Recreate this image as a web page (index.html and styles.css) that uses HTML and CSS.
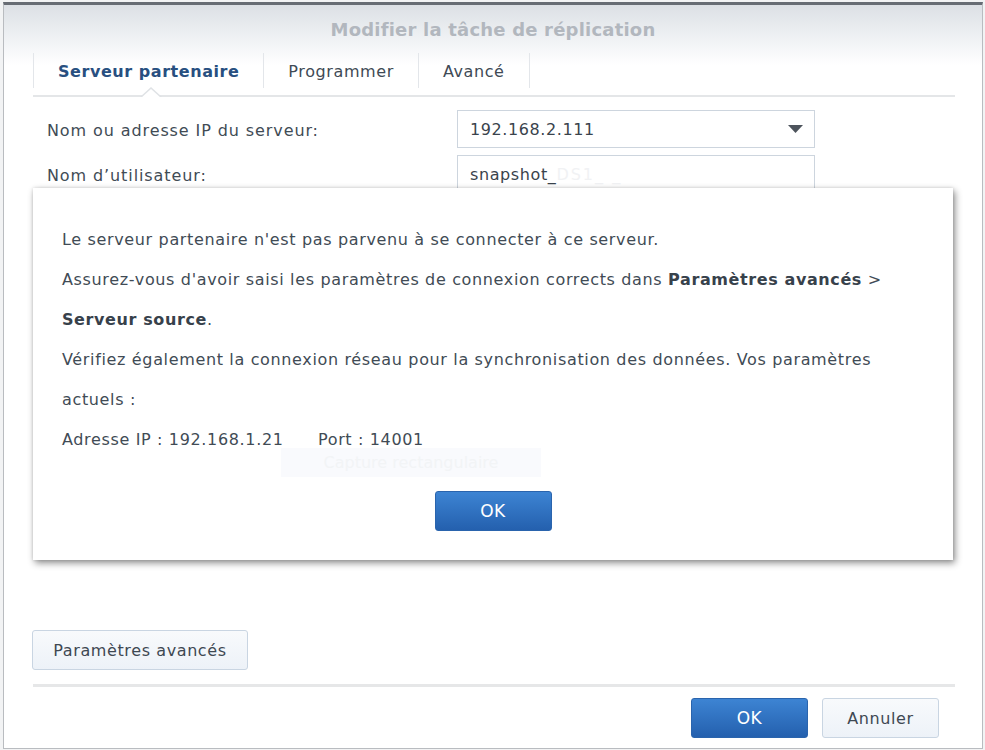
FILE: index.html
```html
<!DOCTYPE html>
<html lang="fr">
<head>
<meta charset="utf-8">
<title>Modifier la tâche de réplication</title>
<link rel="stylesheet" href="styles.css">
</head>
<body>
<div class="window">
  <div class="title">Modifier la tâche de réplication</div>
  <div class="tabs">
    <div class="tab active">Serveur partenaire</div>
    <div class="tab">Programmer</div>
    <div class="tab">Avancé</div>
  </div>
  <div class="form">
    <div class="row">
      <label class="label">Nom ou adresse IP du serveur:</label>
      <div class="field select">
        <span>192.168.2.111</span>
        <svg class="arrow" width="15" height="8" viewBox="0 0 15 8"><path d="M0 0 H15 L7.5 8 Z" fill="#4d545c"/></svg>
      </div>
    </div>
    <div class="row">
      <label class="label">Nom d’utilisateur:</label>
      <div class="field"><span>snapshot_</span><span class="blur">DS1_ _</span></div>
    </div>
  </div>
  <div class="spacer"></div>
  <div class="adv-row">
    <button class="btn light adv">Paramètres avancés</button>
  </div>
  <div class="footer">
    <button class="btn blue">OK</button>
    <button class="btn light">Annuler</button>
  </div>
</div>

<div class="modal">
  <p>Le serveur partenaire n'est pas parvenu à se connecter à ce serveur.</p>
  <p>Assurez-vous d'avoir saisi les paramètres de connexion corrects dans <b>Paramètres avancés</b> &gt;<br><b>Serveur source</b>.</p>
  <p>Vérifiez également la connexion réseau pour la synchronisation des données. Vos paramètres<br>actuels :</p>
  <p>Adresse IP : 192.168.1.21&nbsp;&nbsp;&nbsp;&nbsp;&nbsp; Port : 14001</p>
  <div class="ghost">Capture rectangulaire</div>
  <div class="modal-actions">
    <button class="btn blue">OK</button>
  </div>
</div>
</body>
</html>
```
FILE: styles.css
```css
html, body {
  margin: 0;
  padding: 0;
}
body {
  width: 985px;
  height: 750px;
  background: #f2f3f4;
  font-family: "DejaVu Sans", Verdana, sans-serif;
  color: #414b55;
  position: relative;
  overflow: hidden;
  padding: 2px 3px 0 3px;
  box-sizing: border-box;
}
.window {
  width: 980px;
  height: 747px;
  box-sizing: border-box;
  border-top: 3px solid #676c74;
  border-left: 1px solid #b9bcc0;
  border-right: 1px solid #b9bcc0;
  border-bottom: 1px solid #b9bcc0;
  background: linear-gradient(#dce0e5 0px, #f3f5f7 40px, #ffffff 60px);
  display: flex;
  flex-direction: column;
  padding: 0 27px 0 29px;
}
.title {
  height: 48px;
  line-height: 50px;
  text-align: center;
  font-weight: bold;
  font-size: 18px;
  letter-spacing: 0.2px;
  color: #b2b7be;
  margin: 0 -27px 0 -29px;
}
.tabs {
  display: flex;
  border-bottom: 2px solid #e4e6e8;
  height: 44px;
  box-sizing: border-box;
  position: relative;
}
.tab {
  height: 35px;
  line-height: 38px;
  padding: 0 24px;
  font-size: 16px;
  letter-spacing: 0.6px;
  color: #404a55;
  border-right: 1px solid #e3e6ea;
  position: relative;
}
.tab:first-child {
  border-left: 1px solid #e3e6ea;
}
.tab.active {
  font-weight: bold;
  letter-spacing: 0.55px;
  color: #284f80;
}
.tab.active::before {
  content: "";
  position: absolute;
  left: 106px;
  top: 34px;
  border-left: 11px solid transparent;
  border-right: 11px solid transparent;
  border-bottom: 10px solid #dfe2e5;
}
.tab.active::after {
  content: "";
  position: absolute;
  left: 107px;
  top: 36px;
  border-left: 10px solid transparent;
  border-right: 10px solid transparent;
  border-bottom: 9px solid #ffffff;
}
.form {
  margin-top: 13px;
  padding-left: 14px;
  display: flex;
  flex-direction: column;
  gap: 7px;
}
.row {
  display: flex;
  align-items: center;
  height: 38px;
}
.label {
  width: 410px;
  font-size: 16px;
  letter-spacing: 0.9px;
  color: #414b55;
  padding-top: 3px;
}
.field {
  width: 358px;
  height: 38px;
  box-sizing: border-box;
  border: 1px solid #cdd5de;
  background: #fff;
  display: flex;
  align-items: center;
  padding: 0 12px;
  font-size: 16px;
  letter-spacing: 0.6px;
  color: #3a434c;
}
.select {
  justify-content: space-between;
}
.arrow {
  margin-right: -1px;
}
.blur {
  color: #f1f2f4;
  letter-spacing: 2px;
}
.spacer {
  flex: 1;
}
.adv-row {
  display: flex;
}
.btn {
  font-family: "DejaVu Sans", Verdana, sans-serif;
  font-size: 16px;
  letter-spacing: 0.6px;
  height: 40px;
  border-radius: 3px;
  box-sizing: border-box;
  cursor: pointer;
  padding: 0;
}
.btn.light {
  background: linear-gradient(#f8fafc, #edf2f8);
  border: 1px solid #c9d5e2;
  color: #3e4852;
  width: 117px;
}
.btn.blue {
  background: linear-gradient(#3d84d3, #2460ae);
  border: 1px solid #2a64ad;
  color: #ffffff;
  width: 117px;
  font-size: 17px;
}
.btn.adv {
  width: 216px;
  margin-left: -1px;
}
.footer {
  margin-top: 14px;
  border-top: 3px solid #e6e7e8;
  display: flex;
  justify-content: flex-end;
  gap: 14px;
  padding: 11px 16px 10px 0;
}
.modal {
  position: absolute;
  left: 33px;
  top: 188px;
  width: 920px;
  height: 372px;
  box-sizing: border-box;
  background: #ffffff;
  padding: 32px 29px 0 29px;
  box-shadow: 2px 3px 7px rgba(0, 0, 0, 0.45), 0 0 3px rgba(0, 0, 0, 0.12);
}
.modal p {
  margin: 0;
  font-size: 16px;
  letter-spacing: 0.65px;
  line-height: 40px;
  color: #414b55;
}
.modal b {
  color: #37414b;
  letter-spacing: 0.6px;
}
.ghost {
  position: absolute;
  left: 248px;
  top: 260px;
  width: 260px;
  height: 29px;
  line-height: 29px;
  text-align: center;
  background: #f9fafd;
  color: #f2f4f6;
  font-size: 16px;
}
.modal-actions {
  margin-top: 31px;
  display: flex;
  justify-content: center;
}
.modal-actions .btn {
  width: 117px;
  height: 40px;
}
```
